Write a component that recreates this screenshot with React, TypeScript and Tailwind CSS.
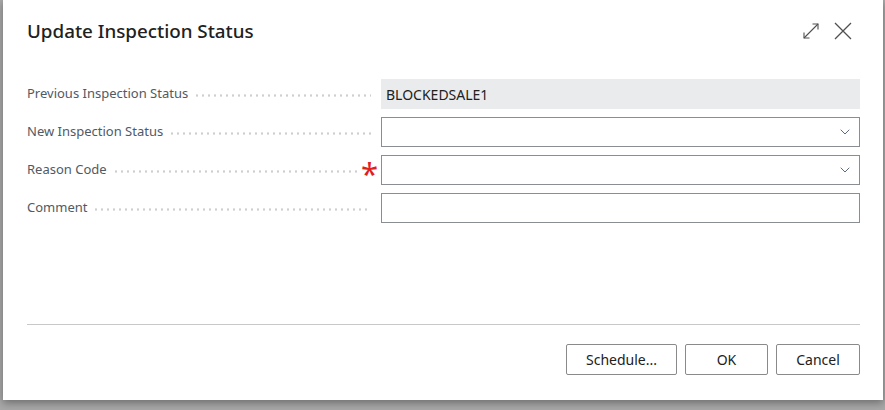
import { ChevronDown } from "lucide-react";

const font = { fontFamily: '"Segoe UI", "Noto Sans", "Open Sans", sans-serif' };

function Leader() {
  // dotted filler between a caption and its field
  return (
    <div className="flex-1 ml-[6px] h-[3px] mt-[2px] bg-[radial-gradient(circle,#cfcfcf_1px,transparent_1.3px)] bg-[length:6px_3px] bg-repeat-x" />
  );
}

function Row({
  label,
  required,
  children,
}: {
  label: string;
  required?: boolean;
  children: React.ReactNode;
}) {
  return (
    <div className="flex items-center h-[30px]">
      <div className="w-[354px] flex items-center text-[13px] text-[#505a64]">
        <span className="whitespace-nowrap">{label}</span>
        <Leader />
        {required ? (
          <span className="w-[22px] pl-[2px] text-[#e0201c] text-[31px] leading-none mt-[6px]">*</span>
        ) : (
          <span className="w-[10px]" />
        )}
      </div>
      <div className="flex-1 h-full">{children}</div>
    </div>
  );
}

function Select() {
  return (
    <div className="h-full border border-[#8a8d92] bg-white flex items-center justify-end pr-[6px]">
      <ChevronDown size={16} strokeWidth={1.3} className="text-[#44556e]" />
    </div>
  );
}

function Btn({ children, w }: { children: React.ReactNode; w: string }) {
  return (
    <button className={`${w} h-[31px] border border-[#8a8a8a] rounded-[2px] bg-white text-[14px] text-[#212121]`}>
      {children}
    </button>
  );
}

export default function App() {
  return (
    <div className="w-[885px] h-[410px] bg-[#a8a8a8] overflow-hidden" style={font}>
      <div className="ml-[3px] w-[880px] h-[400px] bg-white shadow-[0_3px_8px_rgba(0,0,0,0.35)] flex flex-col pl-[24px] pr-[23px]">
        <div className="flex items-center justify-between h-[62px]">
          <h1 className="text-[18.8px] font-medium text-[#212121]">Update Inspection Status</h1>
          <div className="flex items-center gap-[14px] mr-[8px] text-[#505050]">
            <svg width="18" height="18" viewBox="0 0 18 18" fill="none" stroke="currentColor" strokeWidth="1.1">
              <path d="M2 16 L16 2" />
              <path d="M10.5 2 H16 V7.5" />
              <path d="M2 10.5 V16 H7.5" />
            </svg>
            <svg width="18" height="18" viewBox="0 0 18 18" fill="none" stroke="currentColor" strokeWidth="1.3">
              <path d="M1 1 L17 17 M17 1 L1 17" />
            </svg>
          </div>
        </div>

        <div className="flex flex-col gap-[8px] mt-[17px]">
          <Row label="Previous Inspection Status">
            <div className="h-full bg-[#eaebec] flex items-center px-[5px] text-[14px] text-[#212121]">BLOCKEDSALE1</div>
          </Row>
          <Row label="New Inspection Status">
            <Select />
          </Row>
          <Row label="Reason Code" required>
            <Select />
          </Row>
          <Row label="Comment">
            <div className="h-full border border-[#8a8d92] bg-white" />
          </Row>
        </div>

        <div className="flex-1" />
        <div className="border-t border-[#c8c8c8]" />
        <div className="flex justify-end gap-[8px] pt-[19px] pb-[25px]">
          <Btn w="w-[111px]">Schedule...</Btn>
          <Btn w="w-[83px]">OK</Btn>
          <Btn w="w-[84px]">Cancel</Btn>
        </div>
      </div>
    </div>
  );
}
